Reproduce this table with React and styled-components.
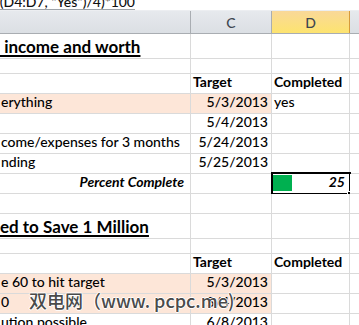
import React from 'react';
import styled, { createGlobalStyle } from 'styled-components';

const GRID = '#dadada';
const PEACH = '#fde6d8';

const GlobalStyle = createGlobalStyle`
  body {
    margin: 0;
    background: #fff;
    font-family: Lato, "Open Sans", sans-serif;
    overflow: hidden;
  }
`;

const Sheet = styled.div`
  position: relative;
  width: 359px;
  height: 325px;
  overflow: hidden;
  background: #fff;
`;

const FormulaBar = styled.div`
  height: 9px;
  width: 135px;
  display: flex;
  justify-content: flex-end;
  overflow: hidden;
  border-bottom: 1px solid #9ea3a8;
`;

const Formula = styled.span`
  margin-top: -6px;
  font-size: 14px;
  font-weight: 500;
  line-height: 15px;
  color: #111;
  white-space: pre;
`;

const Spacer = styled.div`
  height: 1px;
  background: #eceef1;
`;

const Columns = styled.div`
  display: grid;
  grid-template-columns: 191px 81px 78px 1fr;
`;

const HeaderRow = styled(Columns)`
  height: 22px;
  border-bottom: 1px solid #a9adb2;
  box-sizing: content-box;
`;

const HeaderCell = styled.div`
  display: flex;
  align-items: center;
  justify-content: center;
  padding-top: 1px;
  font-size: 14px;
  font-weight: 500;
  color: #3d4650;
  border-right: 1px solid ${p => (p.$active ? '#d79a3a' : '#a9adb2')};
  background: ${p =>
    p.$active
      ? 'linear-gradient(#f9d899, #fde46f)'
      : 'linear-gradient(#e6e9ed, #dbdfe4)'};
  &:last-child {
    border-right: none;
  }
`;

const Row = styled(Columns)`
  height: ${p => p.$h}px;
`;

const Cell = styled.div`
  position: relative;
  display: flex;
  align-items: flex-end;
  justify-content: ${p => (p.$align === 'right' ? 'flex-end' : 'flex-start')};
  padding: 0 ${p => p.$pr ?? 3}px 2px ${p => p.$pl ?? 2}px;
  border-right: 1px solid ${GRID};
  border-bottom: 1px solid ${GRID};
  background: ${p => p.$fill || '#fff'};
  font-size: 14px;
  line-height: 1.2;
  color: #000;
  font-weight: ${p => (p.$bold ? 700 : 500)};
  font-style: ${p => (p.$italic ? 'italic' : 'normal')};
  white-space: pre;
  &:last-child {
    border-right: none;
  }
`;

const Title = styled.span`
  font-size: 17px;
  font-weight: 700;
  text-decoration: underline;
  text-decoration-thickness: 2px;
  text-underline-offset: 2px;
  margin-bottom: -1px;
`;

const Selection = styled.div`
  position: absolute;
  top: -2px;
  left: -1px;
  right: -2px;
  bottom: -2px;
  border: 2px solid #000;
  pointer-events: none;
`;

const Handle = styled.div`
  position: absolute;
  right: -5px;
  bottom: -5px;
  width: 5px;
  height: 5px;
  background: #000;
  border: 1px solid #fff;
`;

const DataBar = styled.div`
  position: absolute;
  left: 1px;
  top: 1px;
  height: 16px;
  background: #00b050;
`;

const Value = styled.span`
  position: relative;
  font-weight: 700;
  font-style: italic;
`;

const Watermark = styled.div`
  position: absolute;
  left: 29px;
  top: 291px;
  font-family: "Noto Sans CJK SC", sans-serif;
  font-size: 18px;
  font-weight: 500;
  line-height: 1;
  color: #4a4a4a;
  white-space: pre;
  text-shadow: 1px 0 0 #fff, -1px 0 0 #fff, 0 1px 0 #fff, 0 -1px 0 #fff;
`;

const rows = [
  { h: 25, title: ' income and worth' },
  { h: 15 },
  { h: 20, c: 'Target', d: 'Completed', bold: true },
  { h: 20, fill: true, b: 'erything', c: '5/3/2013', d: 'yes' },
  { h: 20, c: '5/4/2013' },
  { h: 20, b: 'come/expenses for 3 months', c: '5/24/2013' },
  { h: 20, b: 'nding', c: '5/25/2013' },
  { h: 20, b: 'Percent Complete', total: true, bar: 25 },
  { h: 20 },
  { h: 25, title: 'ed to Save 1 Million' },
  { h: 15 },
  { h: 20, c: 'Target', d: 'Completed', bold: true },
  { h: 20, fill: true, b: 'e 60 to hit target', c: '5/3/2013' },
  { h: 20, fill: true, b: '0', c: '5/4/2013' },
  { h: 20, b: 'ution possible', c: '6/8/2013' },
];

function SheetRow({ row }) {
  const fill = row.fill ? PEACH : null;
  const dateCell = !row.bold;
  return (
    <Row $h={row.h}>
      {row.title ? (
        <Cell $pl={0} $fill={fill}>
          <Title>{row.title}</Title>
        </Cell>
      ) : (
        <Cell
          $fill={fill}
          $pl={1}
          $pr={6}
          $align={row.total ? 'right' : 'left'}
          $bold={row.total}
          $italic={row.total}
        >
          {row.b}
        </Cell>
      )}
      <Cell $fill={fill} $bold={row.bold} $align={dateCell ? 'right' : 'left'}>
        {row.c}
      </Cell>
      <Cell $bold={row.bold} $align={row.bar ? 'right' : 'left'} $pr={4}>
        {row.bar ? (
          <>
            <DataBar style={{ width: `${row.bar * 0.76}px` }} />
            <Value>{row.bar}</Value>
            <Selection>
              <Handle />
            </Selection>
          </>
        ) : (
          row.d
        )}
      </Cell>
      <Cell />
    </Row>
  );
}

export default function App() {
  return (
    <>
      <GlobalStyle />
      <Sheet>
        <FormulaBar>
          <Formula>=(COUNTIF(D4:D7, "Yes")/4)*100</Formula>
        </FormulaBar>
        <Spacer />
        <HeaderRow>
          <HeaderCell />
          <HeaderCell>C</HeaderCell>
          <HeaderCell $active>D</HeaderCell>
          <HeaderCell />
        </HeaderRow>
        {rows.map((row, i) => (
          <SheetRow key={i} row={row} />
        ))}
        <Watermark>双电网（www. pcpc.me)</Watermark>
      </Sheet>
    </>
  );
}
